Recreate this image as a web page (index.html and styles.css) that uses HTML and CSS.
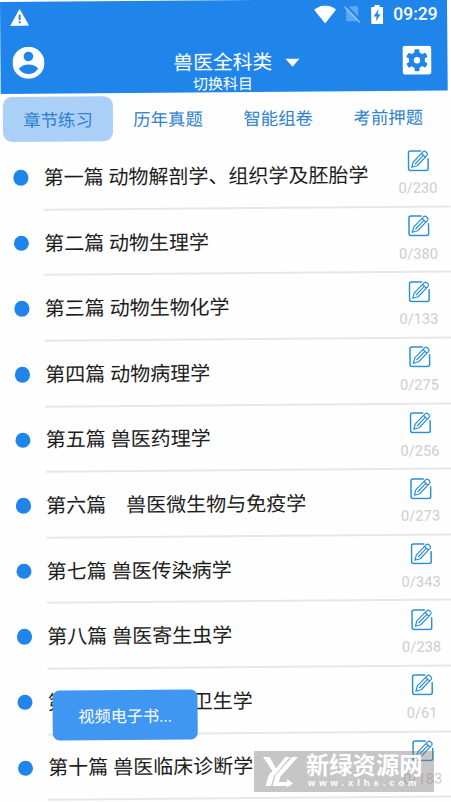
FILE: index.html
```html
<!DOCTYPE html>
<html lang="zh-CN">
<head>
<meta charset="utf-8">
<title>兽医全科类</title>
<link rel="stylesheet" href="styles.css">
</head>
<body>
<svg class="defs" aria-hidden="true">
  <symbol id="edit" viewBox="0 0 22 22">
    <g fill="none" stroke="currentColor" stroke-linecap="round" stroke-linejoin="round">
      <path stroke-width="1.5" d="M13.500 1.200H3.200Q1.200 1.200 1.200 3.200V18.800Q1.200 20.800 3.200 20.800H18.800Q20.800 20.800 20.800 18.800V9"/>
      <path stroke-width="1.2" d="M4.500 17.500L6 12.200L16 2Q17.300 1 18.600 2.100L19.800 3.300Q20.800 4.500 19.800 5.800L9.800 16ZM14.400 3.800L18 7.400M8 14L15.600 6.200"/>
    </g>
  </symbol>
</svg>
<div class="phone">
  <header class="header">
    <div class="status">
      <svg class="warn" viewBox="0 0 19 17"><path fill="#fff" d="M9.500 0L19 17H0Z"/><path stroke="#1f85eb" stroke-width="2" d="M9.500 6V11.200M9.500 12.500V14.500"/></svg>
      <svg class="wifi" viewBox="0 0 22 18"><path fill="#fff" d="M0 4.200Q11-4.200 22 4.200L11 18Z"/></svg>
      <svg class="sim" viewBox="0 0 17 18"><path fill="#5ca8f2" d="M5 1H14V16H2V4Z"/><path stroke="#1f85eb" stroke-width="2" d="M2 0L18 17"/><path stroke="#8bc1f7" stroke-width="1.400" d="M.5 1.500L16 17.500"/></svg>
      <svg class="battery" viewBox="0 0 12 19"><path fill="#fff" d="M3.500 0H8.500V2H11Q12 2 12 3V18Q12 19 11 19H1Q0 19 0 18V3Q0 2 1 2H3.500Z"/><path fill="#1f85eb" d="M7.500 4L2.500 11.500H5.500L4.500 16.500L9.500 9.300H6.500Z"/></svg>
      <span class="time">09:29</span>
    </div>
    <div class="bar">
      <svg class="avatar" viewBox="0 0 32 32"><circle cx="16" cy="16" r="16" fill="#fff"/><circle cx="16" cy="9.700" r="4.800" fill="#1f85eb"/><path fill="#1f85eb" d="M6.300 21.800Q10 17.600 16 17.600T25.700 21.800Q22 27.300 16 27.300T6.300 21.800Z"/></svg>
      <div class="titles">
        <div class="title">兽医全科类<span class="caret"></span></div>
        <div class="subtitle">切换科目</div>
      </div>
      <svg class="gear" viewBox="0 0 29 29"><rect width="29" height="29" rx="3" fill="#fff"/><g fill="#1f85eb" transform="translate(14.500 14.500)"><circle r="8"/><rect x="-2.500" y="-11" width="5" height="22" rx="1"/><rect x="-2.500" y="-11" width="5" height="22" rx="1" transform="rotate(60)"/><rect x="-2.500" y="-11" width="5" height="22" rx="1" transform="rotate(120)"/><circle r="3.200" fill="#fff"/></g></svg>
    </div>
  </header>
  <nav class="tabs">
    <div class="tab active">章节练习</div>
    <div class="tab">历年真题</div>
    <div class="tab">智能组卷</div>
    <div class="tab">考前押题</div>
  </nav>
  <main class="list">
    <div class="row"><i class="dot"></i><div class="cell"><span class="name">第一篇 动物解剖学、组织学及胚胎学</span><span class="side"><svg class="edit"><use href="#edit"/></svg><span class="count">0/230</span></span></div></div>
    <div class="row"><i class="dot"></i><div class="cell"><span class="name">第二篇 动物生理学</span><span class="side"><svg class="edit"><use href="#edit"/></svg><span class="count">0/380</span></span></div></div>
    <div class="row"><i class="dot"></i><div class="cell"><span class="name">第三篇 动物生物化学</span><span class="side"><svg class="edit"><use href="#edit"/></svg><span class="count">0/133</span></span></div></div>
    <div class="row"><i class="dot"></i><div class="cell"><span class="name">第四篇 动物病理学</span><span class="side"><svg class="edit"><use href="#edit"/></svg><span class="count">0/275</span></span></div></div>
    <div class="row"><i class="dot"></i><div class="cell"><span class="name">第五篇 兽医药理学</span><span class="side"><svg class="edit"><use href="#edit"/></svg><span class="count">0/256</span></span></div></div>
    <div class="row"><i class="dot"></i><div class="cell"><span class="name">第六篇　兽医微生物与免疫学</span><span class="side"><svg class="edit"><use href="#edit"/></svg><span class="count">0/273</span></span></div></div>
    <div class="row"><i class="dot"></i><div class="cell"><span class="name">第七篇 兽医传染病学</span><span class="side"><svg class="edit"><use href="#edit"/></svg><span class="count">0/343</span></span></div></div>
    <div class="row"><i class="dot"></i><div class="cell"><span class="name">第八篇 兽医寄生虫学</span><span class="side"><svg class="edit"><use href="#edit"/></svg><span class="count">0/238</span></span></div></div>
    <div class="row"><i class="dot"></i><div class="cell"><span class="name">第九篇 兽医公共卫生学</span><span class="side"><svg class="edit"><use href="#edit"/></svg><span class="count">0/61</span></span></div></div>
    <div class="row"><i class="dot"></i><div class="cell"><span class="name">第十篇 兽医临床诊断学</span><span class="side"><svg class="edit"><use href="#edit"/></svg><span class="count">0/183</span></span></div></div>
  </main>
  <div class="toast">视频电子书...</div>
</div>
<div class="watermark">
  <svg class="mark" viewBox="0 0 36 32"><path fill="#fff" d="M0 1H6.500L13 12.500L22.500 1H27L11 20L8 30H2.500L6 18.500L9.500 15Z"/><path fill="#fff" d="M29 1H35L17.500 20.500L15.800 26H24V23L30 27.500L24 31.500V30H9.500L12.500 19.500Z"/></svg>
  <div class="wtext"><div class="wname">新绿资源网</div><div class="wurl">www.xlhs.com</div></div>
</div>
</body>
</html>
```
FILE: styles.css
```css
* { box-sizing: border-box; }
html, body { margin: 0; height: 802px; overflow: hidden; background: #fefefe; }
body { position: relative; font-family: Roboto, "Noto Sans CJK SC", sans-serif; }
svg { display: block; flex: none; }
.defs { position: absolute; width: 0; height: 0; }

/* the whole screen sits slightly tilted */
.phone {
  position: relative;
  width: 447px;
  height: 812px;
  padding-top: 2px;
  transform: rotate(-0.45deg);
  transform-origin: 0 0;
}

.header { height: 91.500px; background: #1f85eb; color: #fff; }
.status { display: flex; align-items: center; height: 30px; padding: 0 9.500px 0 10px; }
.warn { width: 19px; height: 17px; margin-right: auto; }
.wifi { width: 22px; height: 18px; margin-right: 8px; }
.sim { width: 17px; height: 18px; margin-right: 10px; }
.battery { width: 12px; height: 19px; margin-right: 10px; }
.time { font-size: 17.500px; font-weight: 500; line-height: 20px; }

.bar { display: flex; height: 61px; padding: 0 16px 0 12.300px; }
.avatar { width: 32px; height: 32px; margin-top: 15px; }
.gear { width: 29px; height: 29px; margin: 16.500px 0 0 auto; }
.titles { width: 130px; margin-left: 128.500px; padding-top: 21px; }
.title { display: flex; align-items: center; font-size: 19.800px; line-height: 23px; white-space: nowrap; }
.caret { margin-left: 13px; border: 7.500px solid transparent; border-top: 8.500px solid #fff; border-bottom: 0; }
.subtitle { padding-left: 19.500px; font-size: 15px; line-height: 20px; }

.tabs { display: flex; height: 51.700px; padding: 3px 0 0 2px; }
.tab {
  width: 110.100px;
  height: 45px;
  padding-top: 2px;
  border-radius: 9px;
  color: #2f82cc;
  font-size: 17.400px;
  line-height: 45px;
  text-align: center;
}
.tab.active { background: #abd0f7; color: #2b80cf; }

.row { display: flex; align-items: center; height: 65.600px; padding-left: 11.700px; }
.dot { flex: none; width: 15.500px; height: 15.500px; margin-right: 15px; border-radius: 50%; background: #1f85eb; }
.cell {
  display: flex;
  flex: 1;
  align-items: center;
  justify-content: space-between;
  height: 100%;
  margin-right: -2px;
  padding-right: 2px;
  border-bottom: 2px solid #e7e7e7;
}
.name { padding-top: 2px; color: #1c1c1c; font-size: 20px; line-height: 30px; white-space: nowrap; }
.side { display: flex; flex-direction: column; align-items: center; width: 61px; height: 100%; padding-top: 7.500px; }
.edit { width: 22px; height: 22px; color: #2b8fd6; }
.count { margin-top: 7.500px; color: #cdcdcd; font-size: 14.700px; line-height: 18px; }

.toast {
  position: absolute;
  left: 47px;
  top: 691px;
  width: 145px;
  height: 50px;
  padding-top: 2px;
  border-radius: 7px;
  background: #3f97f2;
  color: #fff;
  font-size: 16.200px;
  line-height: 50px;
  text-align: center;
}

.watermark {
  position: absolute;
  left: 254px;
  top: 751px;
  display: flex;
  width: 180px;
  height: 41px;
  padding: 5px 0 0 9px;
  background: rgba(125, 125, 125, 0.43);
  color: #fff;
}
.mark { width: 36px; height: 32px; }
.wtext { margin-left: 7px; }
.wname { font-size: 23.300px; font-weight: 700; line-height: 21px; white-space: nowrap; }
.wurl { padding: 1px 0 0 2px; font: 700 9.500px/10px "Liberation Sans", sans-serif; letter-spacing: 3.900px; white-space: nowrap; }
```
